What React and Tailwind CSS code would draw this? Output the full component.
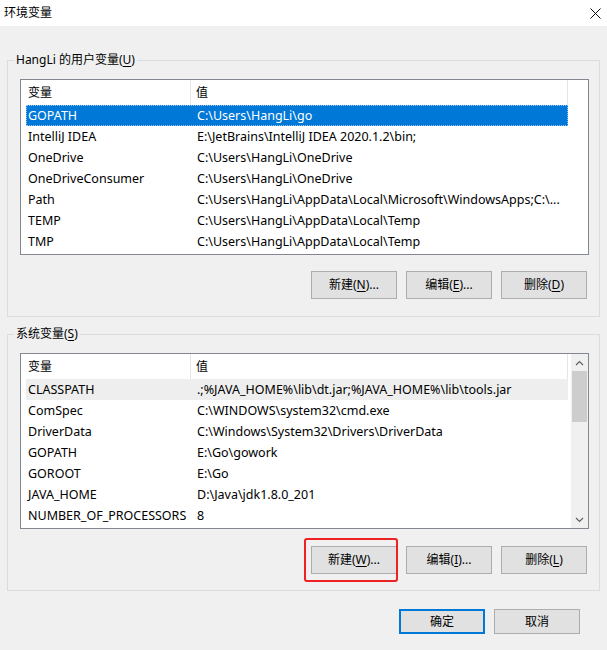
import clsx from "clsx";

const userVars = [
  ["GOPATH", "C:\\Users\\HangLi\\go"],
  ["IntelliJ IDEA", "E:\\JetBrains\\IntelliJ IDEA 2020.1.2\\bin;"],
  ["OneDrive", "C:\\Users\\HangLi\\OneDrive"],
  ["OneDriveConsumer", "C:\\Users\\HangLi\\OneDrive"],
  ["Path", "C:\\Users\\HangLi\\AppData\\Local\\Microsoft\\WindowsApps;C:\\..."],
  ["TEMP", "C:\\Users\\HangLi\\AppData\\Local\\Temp"],
  ["TMP", "C:\\Users\\HangLi\\AppData\\Local\\Temp"],
];

const sysVars = [
  ["CLASSPATH", ".;%JAVA_HOME%\\lib\\dt.jar;%JAVA_HOME%\\lib\\tools.jar"],
  ["ComSpec", "C:\\WINDOWS\\system32\\cmd.exe"],
  ["DriverData", "C:\\Windows\\System32\\Drivers\\DriverData"],
  ["GOPATH", "E:\\Go\\gowork"],
  ["GOROOT", "E:\\Go"],
  ["JAVA_HOME", "D:\\Java\\jdk1.8.0_201"],
  ["NUMBER_OF_PROCESSORS", "8"],
];

const Key = ({ children }) => <span className="underline underline-offset-2">{children}</span>;

const Header = () => (
  <div className="flex h-[25px] items-center">
    <div className="w-[169px] pl-[7px]">变量</div>
    <div className="h-full w-px bg-[#e5e5e5]" />
    <div className="w-[376px] pl-[5px]">值</div>
    <div className="h-full w-px bg-[#e5e5e5]" />
  </div>
);

const Row = ({ name, value, selected, hover }) => (
  <div
    className={clsx(
      "ml-[5px] flex h-[21px] w-[542px] items-center whitespace-nowrap pt-[1px] text-[12.5px]",
      selected && "bg-[#0078d7] text-white outline-1 -outline-offset-1 outline-dotted outline-[#9cc6ef]",
      hover && "bg-[#eeeeee]"
    )}
  >
    <span className="w-[170px] pl-[2px]">{name}</span>
    <span className="pl-[1px]">{value}</span>
  </div>
);

const Chevron = ({ down }) => (
  <svg width="9" height="6" viewBox="0 0 9 6">
    <polyline
      points={down ? "1,1 4.5,4.5 8,1" : "1,5 4.5,1.5 8,5"}
      fill="none"
      stroke="#606060"
      strokeWidth="1.2"
    />
  </svg>
);

const Button = ({ children, primary, className }) => (
  <button
    className={clsx(
      "flex w-[86px] items-center justify-center bg-[#e1e1e1]",
      primary ? "border-2 border-[#0078d7]" : "border border-[#adadad]",
      className || "h-[28px]"
    )}
  >
    {children}
  </button>
);

const Group = ({ label, children, className }) => (
  <fieldset className={clsx("border border-[#dcdcdc] pl-[12px] pr-[10px] pb-[17px] pt-[11px]", className)}>
    <legend className="-ml-[6px] px-[2px] leading-[16px]">{label}</legend>
    {children}
  </fieldset>
);

export default function App() {
  return (
    <div
      className="flex h-[650px] w-[607px] flex-col overflow-hidden bg-[#f0f0f0] text-[12px] text-black"
      style={{ fontFamily: '"Noto Sans", "Noto Sans CJK SC", sans-serif' }}
    >
      <div className="flex h-[26px] items-center justify-between bg-white pl-[4px] pr-[6px]">
        <span>环境变量</span>
        <svg width="11" height="11" viewBox="0 0 11 11">
          <path d="M0.5 0.5 L10.5 10.5 M10.5 0.5 L0.5 10.5" stroke="#111" strokeWidth="1" />
        </svg>
      </div>

      <div className="flex flex-col px-[7px] pt-[26px]">
        <Group label={<>HangLi 的用户变量(<Key>U</Key>)</>}>
          <div className="h-[176px] border border-[#828790] bg-white">
            <Header />
            {userVars.map(([n, v], i) => (
              <Row key={n} name={n} value={v} selected={i === 0} />
            ))}
          </div>
          <div className="mt-[16px] flex justify-end gap-[9px] pr-[2px]">
            <Button>新建(<Key>N</Key>)...</Button>
            <Button>编辑(<Key>E</Key>)...</Button>
            <Button>删除(<Key>D</Key>)</Button>
          </div>
        </Group>

        <Group className="mt-[9px] !pb-[16px]" label={<>系统变量(<Key>S</Key>)</>}>
          <div className="flex h-[176px] border border-[#828790] bg-white">
            <div className="flex-1">
              <Header />
              {sysVars.map(([n, v], i) => (
                <Row key={n} name={n} value={v} hover={i === 0} />
              ))}
            </div>
            <div className="flex w-[17px] flex-col bg-[#f0f0f0]">
              <div className="flex h-[17px] items-center justify-center">
                <Chevron />
              </div>
              <div className="mx-[1px] h-[51px] bg-[#cdcdcd]" />
              <div className="flex-1" />
              <div className="flex h-[17px] items-center justify-center">
                <Chevron down />
              </div>
            </div>
          </div>
          <div className="mt-[17px] flex justify-end gap-[9px] pr-[2px]">
            <div className="relative">
              <Button>新建(<Key>W</Key>)...</Button>
              <div className="absolute -left-[7px] -top-[8px] h-[44px] w-[94px] rounded-[3px] border-2 border-[#ee2222]" />
            </div>
            <Button>编辑(<Key>I</Key>)...</Button>
            <Button>删除(<Key>L</Key>)</Button>
          </div>
        </Group>

        <div className="mt-[18px] flex justify-end gap-[9px] pr-[20px]">
          <Button primary className="h-[25px]">确定</Button>
          <Button className="h-[25px]">取消</Button>
        </div>
      </div>
    </div>
  );
}
